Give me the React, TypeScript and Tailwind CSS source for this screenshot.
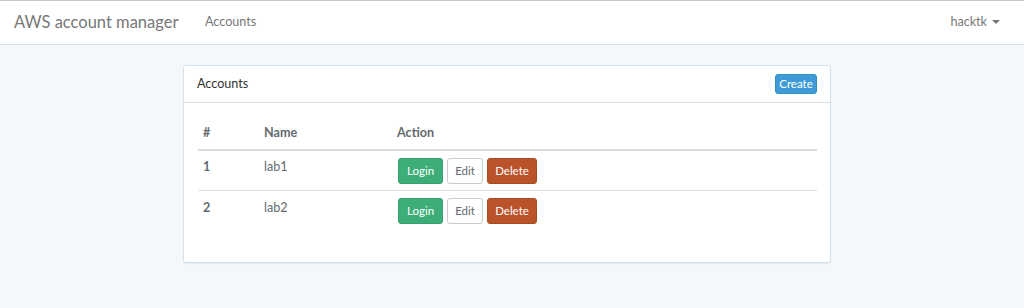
import React from "react";

const rows = [
  { id: 1, name: "lab1" },
  { id: 2, name: "lab2" },
];

export default function App() {
  return (
    <div
      className="min-h-[308px] bg-[#f5f8fa] text-[#636b6f] text-[12.6px]"
      style={{ fontFamily: "Lato, 'Noto Sans', sans-serif" }}
    >
      <div className="h-[45px] bg-white border-t border-t-[#c8c8c8] border-b border-b-[#d3e0e9] flex items-center">
        <div className="pl-[14px] text-[16.5px] text-[#777] w-[205px] -mt-[1px]">AWS account manager</div>
        <div className="text-[12.6px] text-[#777] -mt-[1px]">Accounts</div>
        <div className="ml-auto pr-[24px] flex items-center text-[12.6px] text-[#777] -mt-[1px]">
          hacktk
          <span className="ml-[5px] inline-block w-0 h-0 border-l-[4px] border-r-[4px] border-t-[4px] border-l-transparent border-r-transparent border-t-[#777]" />
        </div>
      </div>
      <div className="pt-[20px] pl-[183px]">
        <div className="w-[648px] bg-white border border-[#d3e0e9] rounded-[3px] shadow-[0_1px_1px_rgba(0,0,0,0.05)]">
          <div className="h-[37px] pl-[13px] pr-[13px] flex items-center border-b border-[#d3e0e9]">
            <span className="text-[#333] text-[12.6px]">Accounts</span>
            <span className="ml-auto h-[20px] w-[42px] flex items-center justify-center rounded-[3px] bg-[#3e9bd5] border border-[#3590c8] text-white text-[11.5px]">
              Create
            </span>
          </div>
          <div className="pt-[14px] pb-[31px] px-[14px]">
            <div className="w-[619px]">
              <div className="flex h-[34px] items-center border-b-2 border-[#ddd] font-bold">
                <div className="w-[66px] pl-[5px]">#</div>
                <div className="w-[133px]">Name</div>
                <div>Action</div>
              </div>
              {rows.map((r, i) => (
                <div
                  key={r.id}
                  className={`flex h-[40px] items-center ${i === 0 ? "border-b border-[#ddd]" : ""}`}
                >
                  <div className="w-[66px] pl-[5px] font-bold -mt-[6px]">{r.id}</div>
                  <div className="w-[133px] -mt-[6px]">{r.name}</div>
                  <div className="flex gap-[4px] pl-[1px]">
                    <span className="h-[26px] w-[45px] flex items-center justify-center rounded-[3px] bg-[#3dae77] border border-[#35a06c] text-white text-[11.5px]">
                      Login
                    </span>
                    <span className="h-[26px] w-[36px] flex items-center justify-center rounded-[3px] bg-white border border-[#ccc] text-[#636b6f] text-[11.5px]">
                      Edit
                    </span>
                    <span className="h-[26px] w-[50px] flex items-center justify-center rounded-[3px] bg-[#bb532a] border border-[#a94a25] text-white text-[11.5px]">
                      Delete
                    </span>
                  </div>
                </div>
              ))}
            </div>
          </div>
        </div>
      </div>
    </div>
  );
}
